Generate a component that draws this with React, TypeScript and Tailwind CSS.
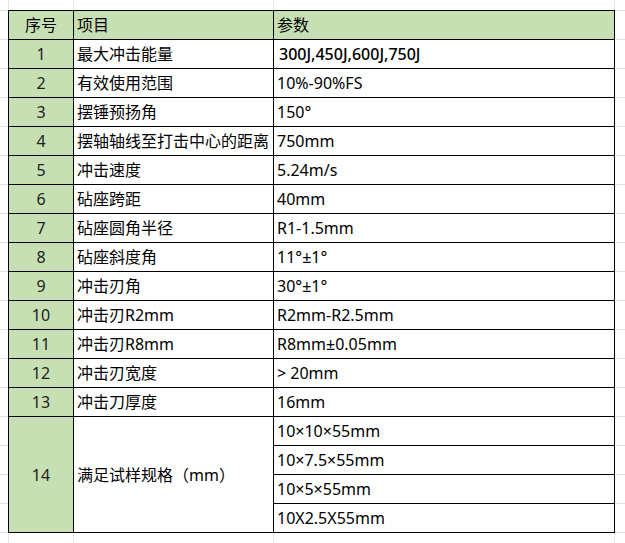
import React from "react"

type Row = {
    no: string
    item: string
    value: string
}

const rows: Row[] = [
    { no: "1", item: "最大冲击能量", value: "300J,450J,600J,750J" },
    { no: "2", item: "有效使用范围", value: "10%-90%FS" },
    { no: "3", item: "摆锤预扬角", value: "150°" },
    { no: "4", item: "摆轴轴线至打击中心的距离", value: "750mm" },
    { no: "5", item: "冲击速度", value: "5.24m/s" },
    { no: "6", item: "砧座跨距", value: "40mm" },
    { no: "7", item: "砧座圆角半径", value: "R1-1.5mm" },
    { no: "8", item: "砧座斜度角", value: "11°±1°" },
    { no: "9", item: "冲击刃角", value: "30°±1°" },
    { no: "10", item: "冲击刃R2mm", value: "R2mm-R2.5mm" },
    { no: "11", item: "冲击刃R8mm", value: "R8mm±0.05mm" },
    { no: "12", item: "冲击刃宽度", value: "> 20mm" },
    { no: "13", item: "冲击刀厚度", value: "16mm" },
]

const specs = ["10×10×55mm", "10×7.5×55mm", "10×5×55mm", "10X2.5X55mm"]

const cell = "border-r border-b border-black flex items-center"
const green = "bg-[#c6e0b4]"

export default function App() {
    return (
        <div
            className="w-[625px] h-[543px] overflow-hidden bg-white pt-[10px] pl-[8px] text-[16px] text-black font-['Noto_Sans','Noto_Sans_CJK_SC',sans-serif] [background-image:repeating-linear-gradient(to_bottom,transparent_0_10px,#e2e2e2_10px_11px,transparent_11px_29px),linear-gradient(to_right,transparent_8px,#e2e2e2_8px_9px,transparent_9px_73px,#e2e2e2_73px_74px,transparent_74px_273px,#e2e2e2_273px_274px,transparent_274px_614px,#e2e2e2_614px_615px,transparent_615px)]"
        >
            <div className="grid grid-cols-[65px_200px_341px] auto-rows-[29px] border-l border-t border-black w-[607px] bg-white">
                {/* header */}
                <div className={`${cell} ${green} justify-center`}>序号</div>
                <div className={`${cell} ${green} pl-[3px]`}>项目</div>
                <div className={`${cell} ${green} pl-[3px]`}>参数</div>

                {rows.map((r, i) => (
                    <React.Fragment key={r.no}>
                        <div className={`${cell} ${green} justify-center text-[#222]`}>{r.no}</div>
                        <div className={`${cell} pl-[3px] whitespace-nowrap`}>{r.item}</div>
                        <div className={`${cell} whitespace-nowrap ${i === 0 ? "pl-[5px] font-medium" : "pl-[3px]"}`}>{r.value}</div>
                    </React.Fragment>
                ))}

                {/* merged row */}
                <div className={`${cell} ${green} row-span-4 justify-center text-[#222]`}>14</div>
                <div className={`${cell} row-span-4 pl-[3px]`}>满足试样规格（mm）</div>
                {specs.map((s) => (
                    <div key={s} className={`${cell} pl-[3px]`}>{s}</div>
                ))}
            </div>
        </div>
    )
}
